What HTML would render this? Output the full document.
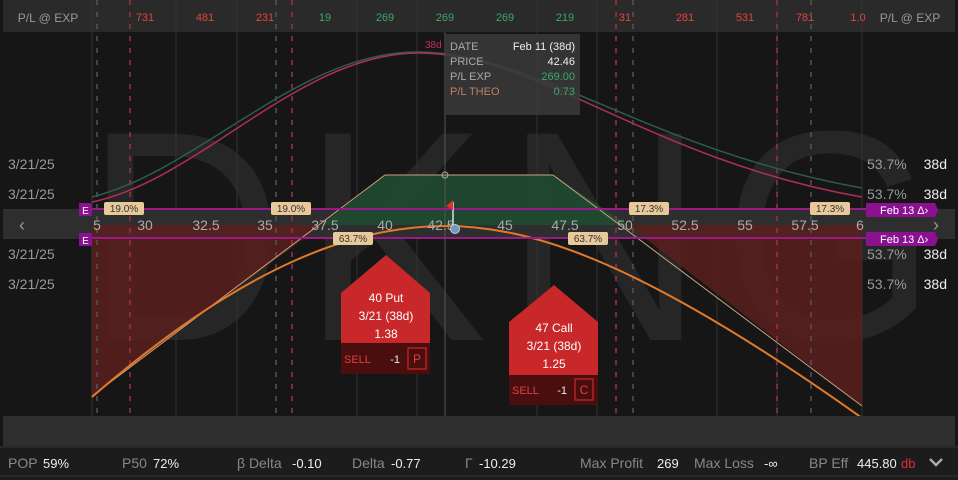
<!DOCTYPE html>
<html><head><meta charset="utf-8"><style>
html,body{margin:0;padding:0;background:#161616;width:958px;height:480px;overflow:hidden;font-family:"Liberation Sans",sans-serif}
svg{display:block}
</style></head><body>
<svg width="958" height="480" viewBox="0 0 958 480" xmlns="http://www.w3.org/2000/svg" font-family="Liberation Sans, sans-serif">
<rect width="958" height="480" fill="#161616"/>
<!-- watermark -->
<text x="85" y="340" font-size="300" fill="#262626" letter-spacing="20" textLength="870" lengthAdjust="spacingAndGlyphs">DKNG</text>
<!-- top bar -->
<rect x="3" y="0" width="952" height="32" fill="#2a2a2a"/>
<g stroke="#333" stroke-width="1">
<line x1="92" y1="0" x2="92" y2="445"/><line x1="862" y1="0" x2="862" y2="445"/>
<line x1="176" y1="0" x2="176" y2="445"/><line x1="237" y1="0" x2="237" y2="445"/><line x1="357" y1="0" x2="357" y2="445"/><line x1="417" y1="0" x2="417" y2="445"/><line x1="537" y1="0" x2="537" y2="445"/><line x1="597" y1="0" x2="597" y2="445"/><line x1="717" y1="0" x2="717" y2="445"/><line x1="777" y1="0" x2="777" y2="445"/>
</g>
<g font-size="11" text-anchor="middle">
<text x="145" y="21" fill="#e0453f">731</text><text x="205" y="21" fill="#e0453f">481</text><text x="265" y="21" fill="#e0453f">231</text>
<text x="325" y="21" fill="#3aa86a">19</text><text x="385" y="21" fill="#3aa86a">269</text><text x="445" y="21" fill="#3aa86a">269</text><text x="505" y="21" fill="#3aa86a">269</text><text x="565" y="21" fill="#3aa86a">219</text>
<text x="625" y="21" fill="#e0453f">31</text><text x="685" y="21" fill="#e0453f">281</text><text x="745" y="21" fill="#e0453f">531</text><text x="805" y="21" fill="#e0453f">781</text><text x="858" y="21" fill="#e0453f">1.0</text>
</g>
<text x="48" y="22" font-size="12" fill="#999" text-anchor="middle">P/L @ EXP</text>
<text x="910" y="22" font-size="12" fill="#999" text-anchor="middle">P/L @ EXP</text>
<!-- axis band -->
<rect x="3" y="209" width="952" height="30" fill="#2e2e2e"/>
<!-- fills -->
<path d="M92 225 L322 225 L92 396 Z" fill="#5a1e1e" opacity="0.85"/>
<path d="M628 225 L862 225 L862 406 Z" fill="#5a1e1e" opacity="0.85"/>
<path d="M322 225 L385 175 L553 175 L628 225 Z" fill="#1f4a30" opacity="0.9"/>
<!-- dashed verticals -->
<g stroke-dasharray="5 7" stroke-width="1.5">
<line x1="130" y1="0" x2="130" y2="445" stroke="#a03048"/><line x1="292" y1="0" x2="292" y2="445" stroke="#a03048"/><line x1="616" y1="0" x2="616" y2="445" stroke="#a03048"/><line x1="777" y1="0" x2="777" y2="445" stroke="#a03048"/>
<line x1="97" y1="0" x2="97" y2="445" stroke="#555"/><line x1="276" y1="0" x2="276" y2="445" stroke="#555"/><line x1="633" y1="0" x2="633" y2="445" stroke="#555"/><line x1="811" y1="0" x2="811" y2="445" stroke="#555"/>
</g>
<line x1="445" y1="32" x2="445" y2="445" stroke="#555"/>
<!-- theo curves -->
<path d="M92 197 C200 170 300 50 420 52 C540 54 650 150 862 188" fill="none" stroke="#2e5a55" stroke-width="1.5"/>
<path d="M92 202 C200 180 300 52 420 53 C540 54 650 160 862 197" fill="none" stroke="#b02e55" stroke-width="1.5"/>
<!-- exp line -->
<path d="M92 396 L385 175 L553 175 L862 406" fill="none" stroke="#c9a27a" stroke-width="1"/>
<!-- orange -->
<path d="M92 397 C250 260 360 226 445 226 C530 226 640 260 862 418" fill="none" stroke="#e07a2a" stroke-width="2"/>
<circle cx="445" cy="175" r="3" fill="none" stroke="#aaa"/>
<!-- magenta lines -->
<line x1="86" y1="209" x2="868" y2="209" stroke="#9a1a8a" stroke-width="2"/>
<line x1="86" y1="238" x2="868" y2="238" stroke="#9a1a8a" stroke-width="2"/>
<rect x="79" y="203" width="13" height="13" fill="#8a1290"/><text x="85.5" y="214" font-size="10" fill="#fff" text-anchor="middle">E</text>
<rect x="79" y="233" width="13" height="13" fill="#8a1290"/><text x="85.5" y="244" font-size="10" fill="#fff" text-anchor="middle">E</text>
<g font-size="10" fill="#333" text-anchor="middle">
<rect x="104" y="202" width="40" height="13" fill="#e8c99a" rx="2"/><text x="124" y="212">19.0%</text>
<rect x="271" y="202" width="40" height="13" fill="#e8c99a" rx="2"/><text x="291" y="212">19.0%</text>
<rect x="629" y="202" width="40" height="13" fill="#e8c99a" rx="2"/><text x="649" y="212">17.3%</text>
<rect x="810" y="202" width="40" height="13" fill="#e8c99a" rx="2"/><text x="830" y="212">17.3%</text>
<rect x="333" y="232" width="40" height="13" fill="#e8c99a" rx="2"/><text x="353" y="242">63.7%</text>
<rect x="568" y="232" width="40" height="13" fill="#e8c99a" rx="2"/><text x="588" y="242">63.7%</text>
</g>
<g font-size="14" fill="#aaa" text-anchor="middle">
<text x="97" y="230">5</text><text x="145" y="230">30</text><text x="206" y="230">32.5</text><text x="265" y="230">35</text><text x="325" y="230">37.5</text><text x="385" y="230">40</text><text x="441" y="230">42.5</text><text x="505" y="230">45</text><text x="565" y="230">47.5</text><text x="625" y="230">50</text><text x="685" y="230">52.5</text><text x="745" y="230">55</text><text x="805" y="230">57.5</text><text x="860" y="230">6</text>
</g>
<text x="22" y="231" font-size="18" fill="#999" text-anchor="middle">‹</text>
<text x="936" y="231" font-size="18" fill="#999" text-anchor="middle">›</text>
<!-- flag + marker -->
<line x1="453" y1="202" x2="453" y2="226" stroke="#ddd" stroke-width="1.5"/>
<path d="M453 200 L446 206 L453 210 Z" fill="#e03030"/>
<circle cx="455" cy="229" r="4.5" fill="#6a9ac8" stroke="#ccc"/>
<!-- Feb badges -->
<path d="M866 203 L935 203 L938 210 L935 217 L866 217 Z" fill="#8a1290"/><text x="880" y="214" font-size="11" fill="#fff">Feb 13 Δ›</text>
<path d="M866 232 L935 232 L938 239 L935 246 L866 246 Z" fill="#8a1290"/><text x="880" y="243" font-size="11" fill="#fff">Feb 13 Δ›</text>
<!-- side labels -->
<g font-size="14" fill="#999">
<text x="8" y="169">3/21/25</text><text x="8" y="199">3/21/25</text><text x="8" y="259">3/21/25</text><text x="8" y="289">3/21/25</text>
<text x="867" y="169">53.7%</text><text x="867" y="199">53.7%</text><text x="867" y="259">53.7%</text><text x="867" y="289">53.7%</text>
</g>
<g font-size="14" fill="#eee" text-anchor="end">
<text x="947" y="169">38d</text><text x="947" y="199">38d</text><text x="947" y="259">38d</text><text x="947" y="289">38d</text>
</g>
<!-- tooltip -->
<rect x="445" y="34" width="135" height="81" fill="#3a3a3a" opacity="0.85"/>
<text x="425" y="48" font-size="10" fill="#c0305a">38d</text>
<g font-size="11">
<text x="450" y="50" fill="#aaa">DATE</text><text x="575" y="50" fill="#eee" text-anchor="end">Feb 11 (38d)</text>
<text x="450" y="65" fill="#aaa">PRICE</text><text x="575" y="65" fill="#eee" text-anchor="end">42.46</text>
<text x="450" y="80" fill="#aaa">P/L EXP</text><text x="575" y="80" fill="#3aa86a" text-anchor="end">269.00</text>
<text x="450" y="95" fill="#c08060">P/L THEO</text><text x="575" y="95" fill="#3aa86a" text-anchor="end">0.73</text>
</g>
<!-- tickets -->
<g>
<path d="M341 293 L386 255 L430 293 L430 374 L341 374 Z" fill="#c8282a"/>
<rect x="341" y="343" width="89" height="31" fill="#4a0e0e"/>
<g font-size="12" fill="#fff" text-anchor="middle"><text x="386" y="302">40 Put</text><text x="386" y="320">3/21 (38d)</text><text x="386" y="338">1.38</text></g>
<text x="344" y="363" font-size="11" fill="#e04040">SELL</text><text x="400" y="363" font-size="11" fill="#eee" text-anchor="end">-1</text>
<rect x="408" y="348" width="18" height="21" fill="none" stroke="#e03030"/><text x="417" y="363" font-size="12" fill="#e04040" text-anchor="middle">P</text>
</g>
<g>
<path d="M509 322 L554 285 L598 322 L598 405 L509 405 Z" fill="#c8282a"/>
<rect x="509" y="375" width="89" height="30" fill="#4a0e0e"/>
<g font-size="12" fill="#fff" text-anchor="middle"><text x="554" y="332">47 Call</text><text x="554" y="350">3/21 (38d)</text><text x="554" y="368">1.25</text></g>
<text x="512" y="394" font-size="11" fill="#e04040">SELL</text><text x="567" y="394" font-size="11" fill="#eee" text-anchor="end">-1</text>
<rect x="575" y="379" width="18" height="21" fill="none" stroke="#e03030"/><text x="584" y="394" font-size="12" fill="#e04040" text-anchor="middle">C</text>
</g>
<!-- bottom band -->
<rect x="3" y="416" width="952" height="30" fill="#2e2e2e"/>
<rect x="0" y="446" width="958" height="34" fill="#1c1c1c"/>
<line x1="0" y1="447" x2="958" y2="447" stroke="#333"/>
<line x1="0" y1="476" x2="958" y2="476" stroke="#333"/>
<g font-size="14">
<text x="8" y="468" fill="#888">POP</text><text x="43" y="468" fill="#eee" font-size="13">59%</text>
<text x="122" y="468" fill="#888">P50</text><text x="153" y="468" fill="#eee" font-size="13">72%</text>
<text x="237" y="468" fill="#888">β Delta</text><text x="292" y="468" fill="#eee" font-size="13">-0.10</text>
<text x="352" y="468" fill="#888">Delta</text><text x="391" y="468" fill="#eee" font-size="13">-0.77</text>
<text x="465" y="468" fill="#888">Γ</text><text x="479" y="468" fill="#eee" font-size="13">-10.29</text>
<text x="580" y="468" fill="#888">Max Profit</text><text x="657" y="468" fill="#eee" font-size="13">269</text>
<text x="694" y="468" fill="#888">Max Loss</text><text x="764" y="468" fill="#eee" font-size="13">-∞</text>
<text x="809" y="468" fill="#888">BP Eff</text><text x="857" y="468" fill="#eee" font-size="13">445.80</text><text x="901" y="468" fill="#e03030" font-size="13">db</text>
</g>
<path d="M930 459 L936 465 L942 459" fill="none" stroke="#aaa" stroke-width="2.5"/>
</svg>
</body></html>
